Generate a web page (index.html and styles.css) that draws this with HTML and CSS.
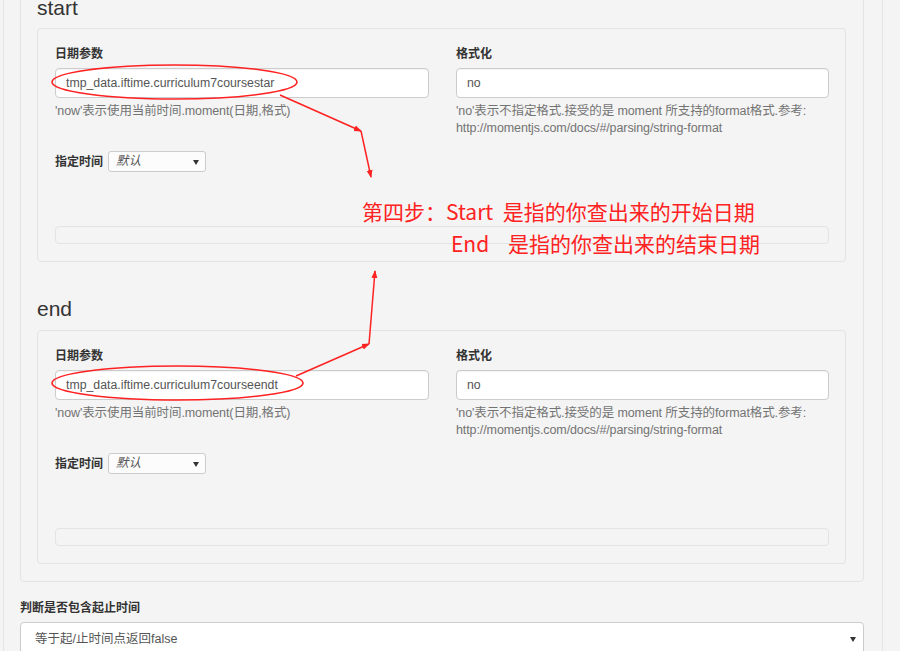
FILE: index.html
```html
<!DOCTYPE html>
<html lang="zh">
<head>
  <meta charset="UTF-8" />
  <meta name="viewport" content="width=device-width, initial-scale=1.0" />
  <title>时间范围</title>
  <link rel="stylesheet" href="styles.css">
</head>
<body>
  <div class="frame">
    <div class="outer">
      <section class="range">
        <h3>start</h3>
        <div class="well-box">
          <div class="cols">
            <div class="field">
              <label>日期参数</label>
              <input class="form-input" type="text" value="tmp_data.iftime.curriculum7coursestar" />
              <p class="help">'now'表示使用当前时间.moment(日期,格式)</p>
            </div>
            <div class="field">
              <label>格式化</label>
              <input class="form-input" type="text" value="no" />
              <p class="help">'no'表示不指定格式.接受的是 moment 所支持的format格式.参考: http://momentjs.com/docs/#/parsing/string-format</p>
            </div>
          </div>
          <div class="time-row">
            <label>指定时间</label>
            <span class="mini-select">默认</span>
          </div>
          <div class="bar"></div>
        </div>
      </section>

      <section class="range">
        <h3>end</h3>
        <div class="well-box">
          <div class="cols">
            <div class="field">
              <label>日期参数</label>
              <input class="form-input" type="text" value="tmp_data.iftime.curriculum7courseendt" />
              <p class="help">'now'表示使用当前时间.moment(日期,格式)</p>
            </div>
            <div class="field">
              <label>格式化</label>
              <input class="form-input" type="text" value="no" />
              <p class="help">'no'表示不指定格式.接受的是 moment 所支持的format格式.参考: http://momentjs.com/docs/#/parsing/string-format</p>
            </div>
          </div>
          <div class="time-row">
            <label>指定时间</label>
            <span class="mini-select">默认</span>
          </div>
          <div class="bar"></div>
        </div>
      </section>
    </div>

    <label class="big-label">判断是否包含起止时间</label>
    <div class="big-select">等于起/止时间点返回false</div>
  </div>

  <!-- red annotations drawn over the screenshot -->
  <svg class="marks" width="900" height="651" viewBox="0 0 900 651">
    <defs>
      <marker id="head" markerWidth="8" markerHeight="8" refX="7" refY="4" orient="auto" markerUnits="userSpaceOnUse">
        <path d="M0,1 L8,4 L0,7 Z" fill="#f22" />
      </marker>
    </defs>
    <ellipse cx="174.5" cy="82" rx="122.5" ry="17" fill="none" stroke="#f22" stroke-width="1.6" />
    <ellipse cx="177.5" cy="383" rx="125.5" ry="17" fill="none" stroke="#f22" stroke-width="1.6" />
    <line x1="280" y1="95" x2="361" y2="131" stroke="#f22" stroke-width="1.5" marker-end="url(#head)" />
    <line x1="361" y1="131" x2="371" y2="177" stroke="#f22" stroke-width="1.5" marker-end="url(#head)" />
    <line x1="296" y1="376" x2="369" y2="344" stroke="#f22" stroke-width="1.5" marker-end="url(#head)" />
    <line x1="369" y1="344" x2="375" y2="271" stroke="#f22" stroke-width="1.5" marker-end="url(#head)" />
  </svg>
  <div class="note">
    <span class="note-line">第四步：Start&nbsp; 是指的你查出来的开始日期</span>
    <span class="note-line second">End&nbsp;&nbsp;&nbsp; 是指的你查出来的结束日期</span>
  </div>
</body>
</html>
```

FILE: styles.css
```css
body {
  margin: 0;
  background: #f4f4f4;
  color: #333;
  font-family: "Liberation Sans", "Noto Sans CJK SC", sans-serif;
  font-size: 12.5px;
  overflow: hidden;
  height: 651px;
}
.frame {
  box-sizing: border-box;
  width: 880px;
  min-height: 100vh;
  margin-left: 3px;
  padding: 0 18px 0 16px;
  border-left: 1px solid #e6e6e6;
  border-right: 1px solid #e6e6e6;
}
.outer {
  margin-top: -20px;
  padding: 16px 17px 17px 16px;
  border: 1px solid #e3e3e3;
  border-radius: 4px;
}
.range h3 {
  margin: 35px 0 10px;
  font-size: 21px;
  font-weight: normal;
  line-height: 23px;
  color: #333;
}
.range:first-child h3 {
  margin-top: -1px;
  margin-bottom: 9px;
}
.well-box {
  padding: 16px 16px 17px 17px;
  border: 1px solid #e3e3e3;
  border-radius: 4px;
}
.cols {
  display: grid;
  grid-template-columns: 374px 373px;
  column-gap: 27px;
}
.field label,
.time-row label,
.big-label {
  display: block;
  font-size: 12px;
  font-weight: bold;
  line-height: 18px;
  color: #333;
}
.field label {
  margin-bottom: 5px;
}
.form-input {
  box-sizing: border-box;
  display: block;
  width: 100%;
  height: 30px;
  margin: 0;
  padding: 0 10px;
  border: 1px solid #ccc;
  border-radius: 4px;
  background: #fff;
  color: #555;
  font: 12.3px "Liberation Sans", "Noto Sans CJK SC", sans-serif;
  box-shadow: inset 0 1px 1px rgba(0, 0, 0, 0.05);
}
.help {
  margin: 5px 0 0;
  line-height: 17px;
  color: #737373;
  letter-spacing: -0.1px;
}
.time-row {
  display: flex;
  align-items: center;
  gap: 5px;
  margin-top: 14px;
}
.mini-select {
  position: relative;
  box-sizing: border-box;
  width: 98px;
  height: 21px;
  padding: 0 7px;
  border: 1px solid #ccc;
  border-radius: 3px;
  background: #fcfcfc;
  color: #555;
  font-style: italic;
  line-height: 19px;
}
.mini-select::after,
.big-select::after {
  content: "";
  position: absolute;
  top: 50%;
  margin-top: -2px;
  border-left: 3px solid transparent;
  border-right: 3px solid transparent;
  border-top: 5px solid #333;
}
.mini-select::after {
  right: 6px;
}
.bar {
  height: 16px;
  margin-top: 54px;
  border: 1px solid #e3e3e3;
  border-radius: 4px;
}
.big-label {
  margin: 17px 0 5px;
}
.big-select {
  position: relative;
  box-sizing: border-box;
  height: 34px;
  padding: 0 14px;
  border: 1px solid #ccc;
  border-radius: 4px;
  background: #fff;
  color: #555;
  line-height: 32px;
}
.big-select::after {
  right: 7px;
}
.marks {
  position: absolute;
  top: 0;
  left: 0;
  pointer-events: none;
}
.note {
  position: absolute;
  top: 195px;
  left: 362px;
  color: #f22;
  font-family: "Noto Sans CJK SC", sans-serif;
  font-size: 21px;
  line-height: 32px;
  white-space: nowrap;
}
.note-line {
  display: block;
}
.note-line.second {
  padding-left: 89px;
}
```
